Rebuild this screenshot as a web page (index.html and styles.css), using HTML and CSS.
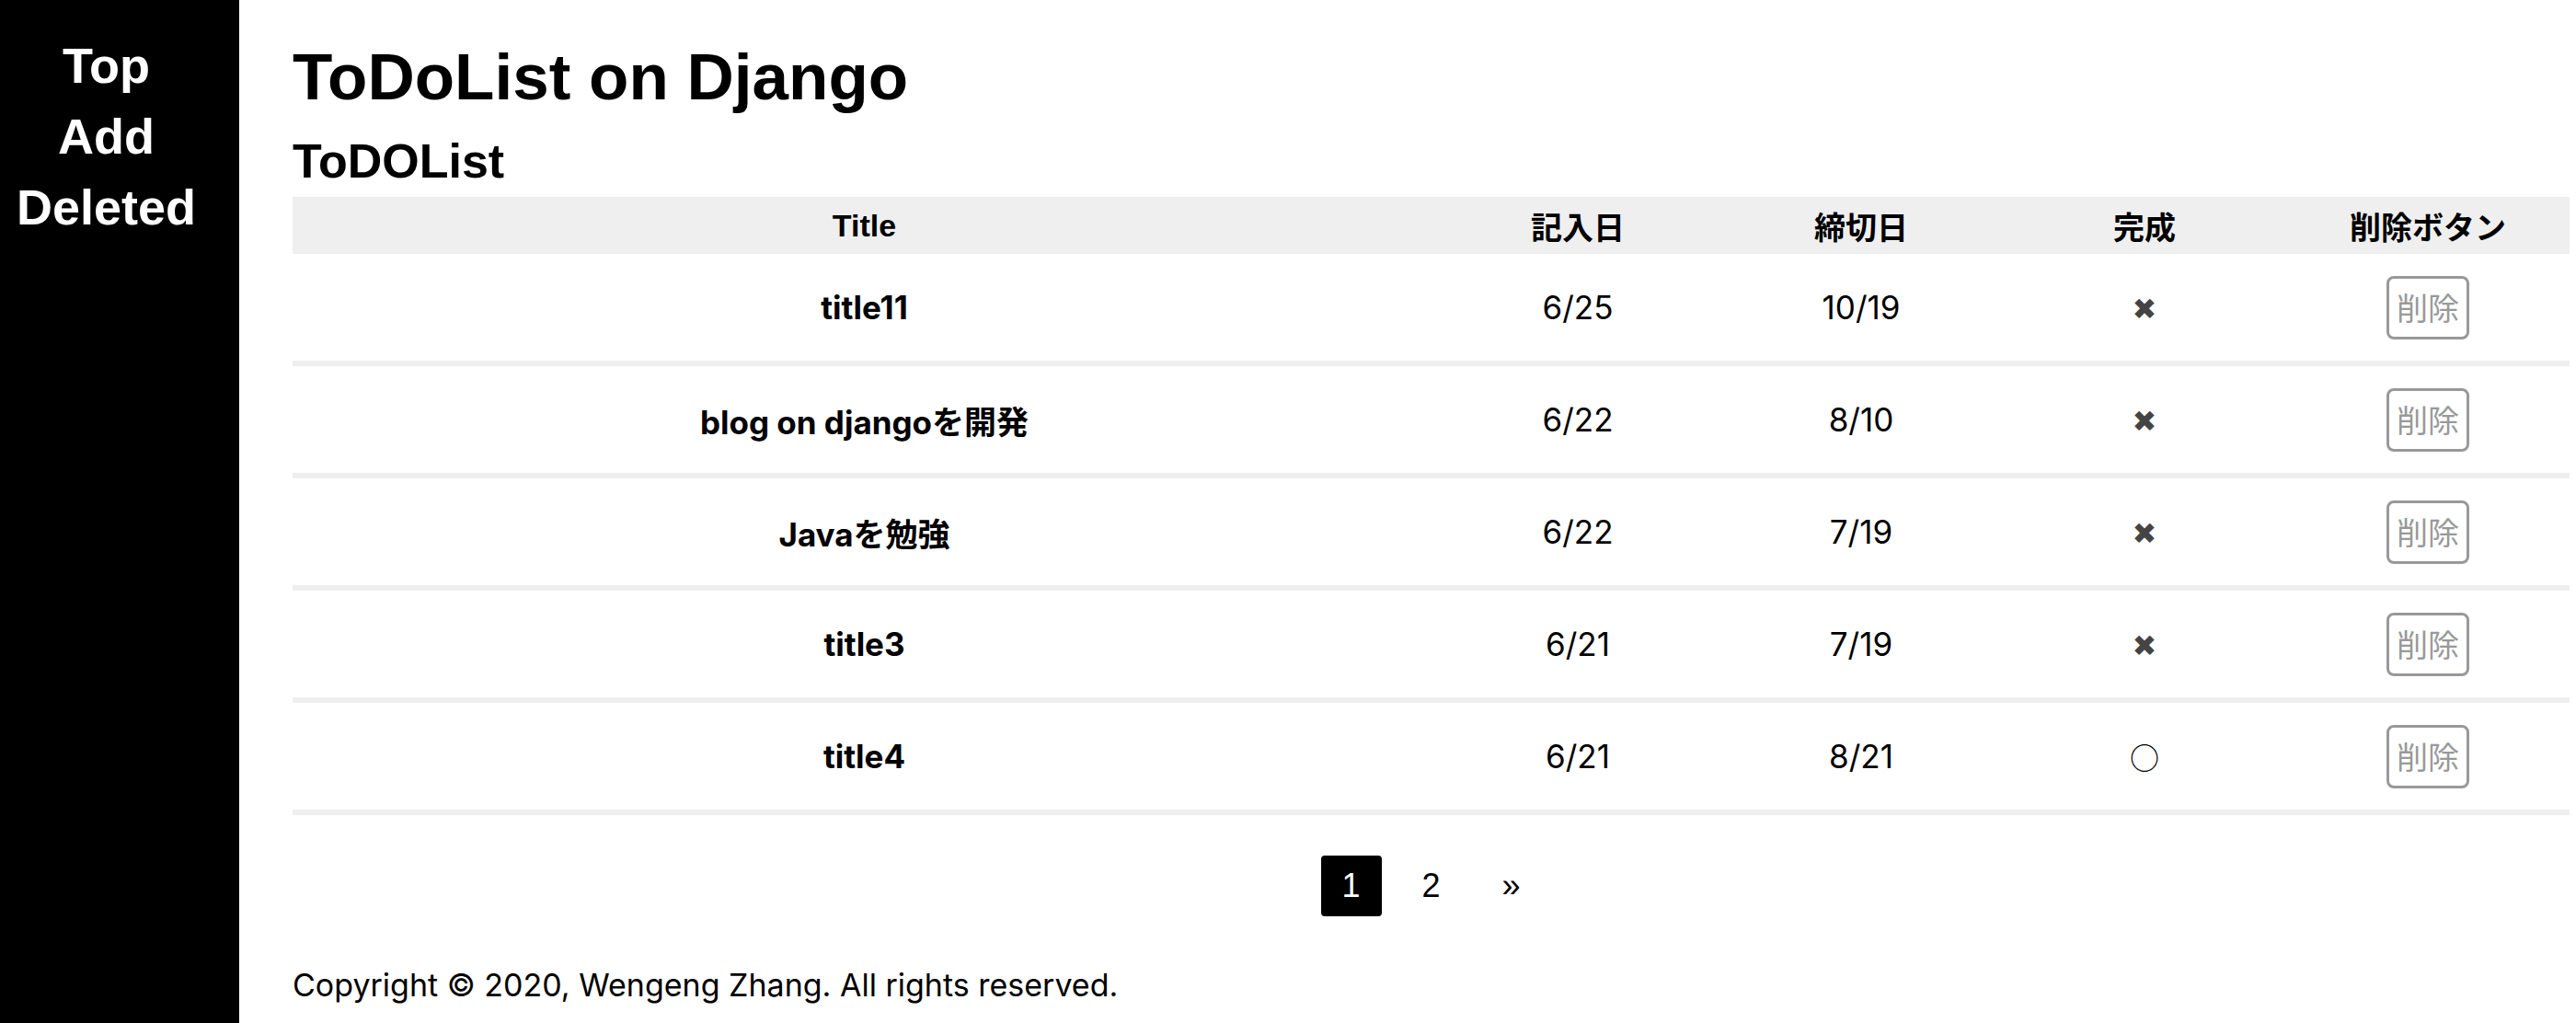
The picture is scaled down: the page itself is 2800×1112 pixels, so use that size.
FILE: index.html
```html
<!DOCTYPE html>
<html lang="ja">
<head>
<meta charset="utf-8">
<title>ToDoList on Django</title>
<link rel="stylesheet" href="styles.css">
</head>
<body>
<aside class="sidebar">
  <nav class="nav">
    <a href="#">Top</a>
    <a href="#">Add</a>
    <a href="#">Deleted</a>
  </nav>
</aside>
<main class="main">
  <h1 class="site-title">ToDoList on Django</h1>
  <h2 class="section-title">ToDOList</h2>
  <table class="todo">
    <colgroup>
      <col class="col-title">
      <col class="col-narrow">
      <col class="col-narrow">
      <col class="col-narrow">
      <col class="col-narrow">
    </colgroup>
    <thead>
      <tr>
        <th>Title</th>
        <th>記入日</th>
        <th>締切日</th>
        <th>完成</th>
        <th>削除ボタン</th>
      </tr>
    </thead>
    <tbody>
      <tr>
        <td class="title-cell">title11</td>
        <td>6/25</td>
        <td>10/19</td>
        <td><span class="mark-no">✖</span></td>
        <td><button class="del-btn">削除</button></td>
      </tr>
      <tr>
        <td class="title-cell">blog on djangoを開発</td>
        <td>6/22</td>
        <td>8/10</td>
        <td><span class="mark-no">✖</span></td>
        <td><button class="del-btn">削除</button></td>
      </tr>
      <tr>
        <td class="title-cell">Javaを勉強</td>
        <td>6/22</td>
        <td>7/19</td>
        <td><span class="mark-no">✖</span></td>
        <td><button class="del-btn">削除</button></td>
      </tr>
      <tr>
        <td class="title-cell">title3</td>
        <td>6/21</td>
        <td>7/19</td>
        <td><span class="mark-no">✖</span></td>
        <td><button class="del-btn">削除</button></td>
      </tr>
      <tr>
        <td class="title-cell">title4</td>
        <td>6/21</td>
        <td>8/21</td>
        <td><span class="mark-yes">○</span></td>
        <td><button class="del-btn">削除</button></td>
      </tr>
    </tbody>
  </table>
  <div class="pagination">
    <a class="page active" href="#">1</a>
    <a class="page" href="#">2</a>
    <a class="page" href="#">»</a>
  </div>
  <footer class="footer">Copyright © 2020, Wengeng Zhang. All rights reserved.</footer>
</main>
</body>
</html>
```

FILE: styles.css
```css
html, body {
  margin: 0;
  padding: 0;
  background: #fff;
}
body {
  display: flex;
  min-height: 100vh;
  font-family: "Liberation Sans", "Noto Sans CJK JP", sans-serif;
  color: #000;
}
.sidebar {
  flex: none;
  width: 260px;
  background: #000;
  box-sizing: border-box;
  padding: 33px 29px 0 0;
}
.nav a {
  display: block;
  color: #fff;
  text-decoration: none;
  text-align: center;
  font-family: "Liberation Sans", sans-serif;
  font-weight: bold;
  font-size: 54px;
  line-height: 77px;
}
.main {
  flex: 1;
  min-width: 0;
  padding: 0 7px 0 58px;
}
.site-title {
  margin: 43px 0 0;
  font-size: 71px;
  line-height: 82px;
  font-weight: bold;
}
.section-title {
  margin: 22px 0 11px;
  font-size: 52px;
  line-height: 56px;
  font-weight: bold;
}
.todo {
  width: 100%;
  border-collapse: separate;
  border-spacing: 0;
  table-layout: fixed;
}
.col-title { width: 1243px; }
.col-narrow { width: 308px; }
.todo th {
  height: 62px;
  padding: 0;
  background: #efefef;
  font-family: "Liberation Sans", "Noto Sans CJK JP", sans-serif;
  font-weight: bold;
  font-size: 34px;
  text-align: center;
  vertical-align: middle;
}
.todo td {
  box-sizing: border-box;
  height: 122px;
  padding: 0;
  border-bottom: 6px solid #efefef;
  text-align: center;
  vertical-align: middle;
  font-family: Inter, "Noto Sans CJK JP", sans-serif;
  font-size: 35px;
}
.todo td.title-cell {
  font-weight: bold;
}
.mark-no {
  font-family: "DejaVu Sans", sans-serif;
  font-size: 32px;
  color: #444;
}
.mark-yes {
  font-family: "Noto Sans CJK JP", sans-serif;
  font-size: 32px;
  color: #000;
}
.del-btn {
  box-sizing: border-box;
  height: 69px;
  padding: 0 8px;
  border: 3px solid #999;
  border-radius: 8px;
  background: #fff;
  color: #999;
  font-family: "Noto Sans CJK JP", sans-serif;
  font-size: 34px;
  line-height: 60px;
  vertical-align: middle;
}
.pagination {
  display: flex;
  justify-content: center;
  gap: 21px;
  margin-top: 44px;
}
.page {
  display: flex;
  align-items: center;
  justify-content: center;
  width: 66px;
  height: 66px;
  border-radius: 4px;
  color: #000;
  text-decoration: none;
  font-family: "Liberation Sans", sans-serif;
  font-size: 36px;
}
.page.active {
  background: #000;
  color: #fff;
}
.footer {
  margin-top: 55px;
  font-family: Inter, "Noto Sans CJK JP", sans-serif;
  font-size: 34px;
  line-height: 40px;
}
```
